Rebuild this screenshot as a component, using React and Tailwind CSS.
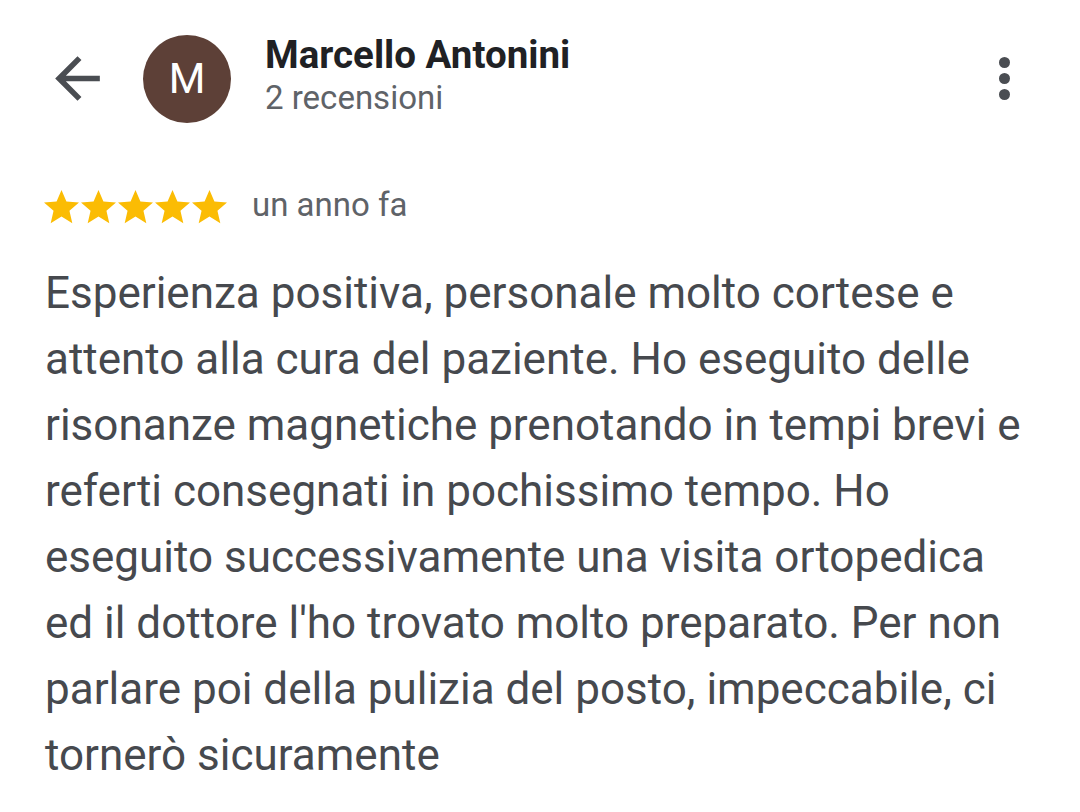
import React from "react";

const Star = () => (
  <svg viewBox="2 1.5 20 20" className="w-[35px] h-[35px] shrink-0">
    <path fill="#fbbc04" d="M12 17.27L18.18 21l-1.64-7.03L22 9.24l-7.19-.61L12 2 9.19 8.63 2 9.24l5.46 4.73L5.82 21z" />
  </svg>
);

const lines = [
  "Esperienza positiva, personale molto cortese e",
  "attento alla cura del paziente. Ho eseguito delle",
  "risonanze magnetiche prenotando in tempi brevi e",
  "referti consegnati in pochissimo tempo. Ho",
  "eseguito successivamente una visita ortopedica",
  "ed il dottore l'ho trovato molto preparato. Per non",
  "parlare poi della pulizia del posto, impeccabile, ci",
  "tornerò sicuramente",
];

export default function App() {
  return (
    <div className="w-[1080px] h-[812px] bg-white overflow-hidden" style={{ fontFamily: "Roboto, sans-serif" }}>
      <div className="flex items-start pt-[32px] pl-[44px] pr-[70px]">
        <svg viewBox="0 0 24 24" className="w-[67px] h-[67px] mt-[13px] shrink-0">
          <path fill="#4a4d52" d="M20 11H7.83l5.59-5.59L12 4l-8 8 8 8 1.41-1.41L7.83 13H20v-2z" />
        </svg>
        <div className="ml-[32px] mt-[3px] w-[88px] h-[88px] shrink-0 rounded-full bg-[#5d4037] flex items-center justify-center text-white text-[42px] leading-none">
          M
        </div>
        <div className="ml-[34px] flex flex-col">
          <div className="text-[38.5px] font-bold text-[#202124] leading-[45px]">Marcello Antonini</div>
          <div className="text-[33px] text-[#5f6368] leading-[42px]">2 recensioni</div>
        </div>
        <div className="ml-auto mt-[25px] flex flex-col gap-[5px] items-center">
          <div className="w-[11px] h-[11px] rounded-full bg-[#4a4d52]" />
          <div className="w-[11px] h-[11px] rounded-full bg-[#4a4d52]" />
          <div className="w-[11px] h-[11px] rounded-full bg-[#4a4d52]" />
        </div>
      </div>
      <div className="flex items-center pl-[44px] mt-[66px] gap-[2px]">
        <Star /><Star /><Star /><Star /><Star />
        <span className="ml-[23px] text-[33px] leading-[35px] -mt-[4px] text-[#5f6368]">un anno fa</span>
      </div>
      <div className="pl-[45px] mt-[36px] text-[44px] leading-[66px] text-[#46494e] whitespace-nowrap">
        {lines.map((l, i) => (
          <div key={i}>{l}</div>
        ))}
      </div>
    </div>
  );
}
